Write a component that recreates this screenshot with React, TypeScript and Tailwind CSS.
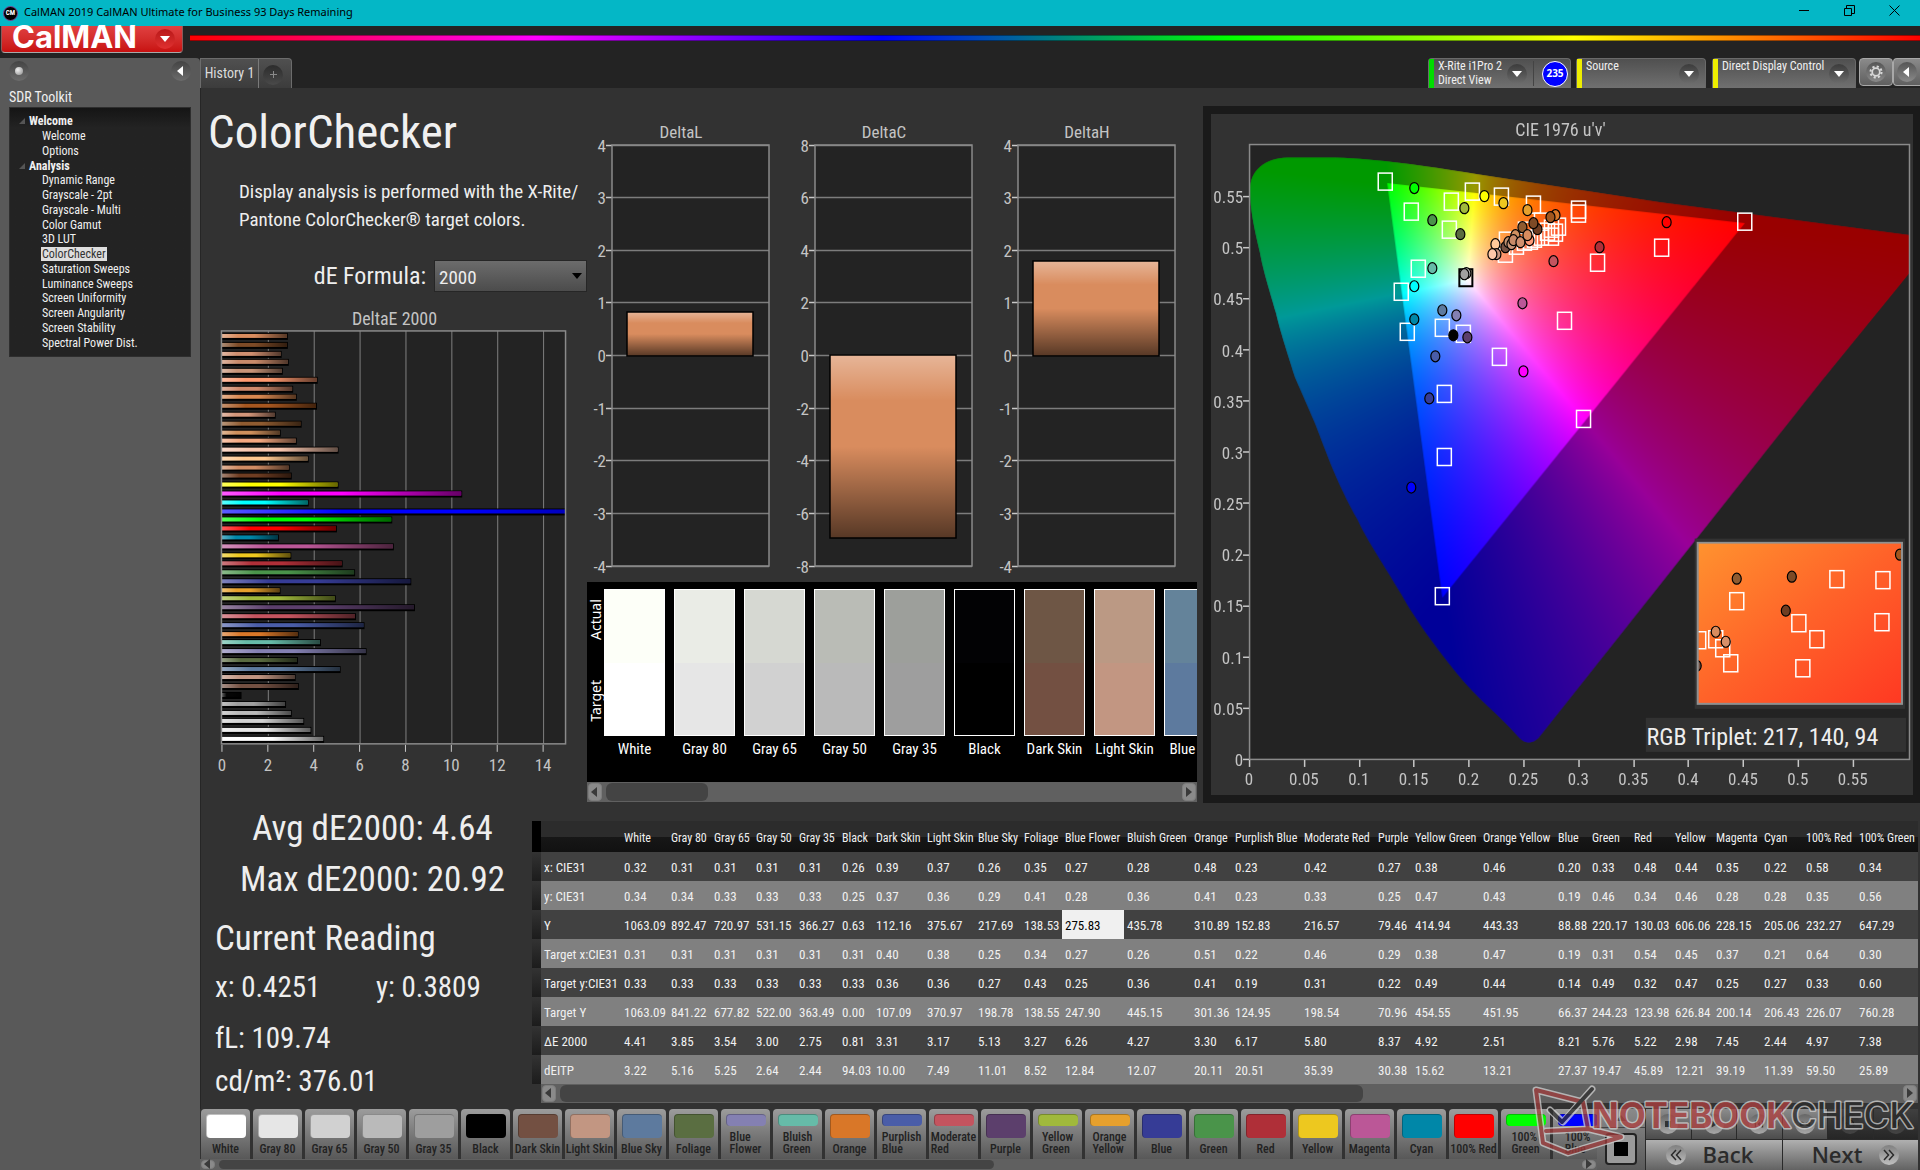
import { useLayoutEffect, useRef } from 'react';
import type { ReactNode } from 'react';

const BAR_DATA: [string, number][] = [
  ['#d98c5e', 2.83], ['#7d4a26', 2.83], ['#d08f70', 2.56], ['#c98a6a', 2.87], ['#c89478', 2.61], ['#ff9a70', 4.13],
  ['#d08a6c', 3.06], ['#d98850', 3.22], ['#a5561f', 4.1], ['#d4967a', 2.3], ['#8f5b30', 3.43], ['#cf905c', 2.52],
  ['#f5a880', 3.22], ['#f8c6ae', 5.04], ['#ffc890', 3.74], ['#d08c64', 2.91], ['#6f3d22', 3.0], ['#ffff00', 5.04],
  ['#ff00ff', 10.43], ['#00ffff', 3.74], ['#0000ff', 20.92], ['#00ff00', 7.38], ['#ff0000', 4.97], ['#0087a8', 2.44],
  ['#bb5797', 7.45], ['#eec81f', 2.98], ['#b02f38', 5.22], ['#4a944a', 5.76], ['#363c96', 8.21], ['#e6a02d', 2.51],
  ['#a0b93c', 4.92], ['#5c3f6c', 8.37], ['#c4545f', 5.8], ['#4a5da8', 6.17], ['#d97728', 3.3], ['#66bba8', 4.27],
  ['#8480b2', 6.26], ['#5a6b40', 3.27], ['#5d7a9e', 5.13], ['#c29682', 3.17], ['#735042', 3.31], ['#050505', 0.81],
  ['#a0a0a0', 2.75], ['#bababa', 3.0], ['#d2d2d2', 3.54], ['#e8e8e8', 3.85], ['#ffffff', 4.41],
];

const COLUMNS: { name: string; width: number; values: string[] }[] = [
  { name: 'White', width: 47, values: ['0.32', '0.34', '1063.09', '0.31', '0.33', '1063.09', '4.41', '3.22'] },
  { name: 'Gray 80', width: 43, values: ['0.31', '0.34', '892.47', '0.31', '0.33', '841.22', '3.85', '5.16'] },
  { name: 'Gray 65', width: 42, values: ['0.31', '0.33', '720.97', '0.31', '0.33', '677.82', '3.54', '5.25'] },
  { name: 'Gray 50', width: 43, values: ['0.31', '0.33', '531.15', '0.31', '0.33', '522.00', '3.00', '2.64'] },
  { name: 'Gray 35', width: 43, values: ['0.31', '0.33', '366.27', '0.31', '0.33', '363.49', '2.75', '2.44'] },
  { name: 'Black', width: 34, values: ['0.26', '0.25', '0.63', '0.31', '0.33', '0.00', '0.81', '94.03'] },
  { name: 'Dark Skin', width: 51, values: ['0.39', '0.37', '112.16', '0.40', '0.36', '107.09', '3.31', '10.00'] },
  { name: 'Light Skin', width: 51, values: ['0.37', '0.36', '375.67', '0.38', '0.36', '370.97', '3.17', '7.49'] },
  { name: 'Blue Sky', width: 46, values: ['0.26', '0.29', '217.69', '0.25', '0.27', '198.78', '5.13', '11.01'] },
  { name: 'Foliage', width: 41, values: ['0.35', '0.41', '138.53', '0.34', '0.43', '138.55', '3.27', '8.52'] },
  { name: 'Blue Flower', width: 62, values: ['0.27', '0.28', '275.83', '0.27', '0.25', '247.90', '6.26', '12.84'] },
  { name: 'Bluish Green', width: 67, values: ['0.28', '0.36', '435.78', '0.26', '0.36', '445.15', '4.27', '12.07'] },
  { name: 'Orange', width: 41, values: ['0.48', '0.41', '310.89', '0.51', '0.41', '301.36', '3.30', '20.11'] },
  { name: 'Purplish Blue', width: 69, values: ['0.23', '0.23', '152.83', '0.22', '0.19', '124.95', '6.17', '20.51'] },
  { name: 'Moderate Red', width: 74, values: ['0.42', '0.33', '216.57', '0.46', '0.31', '198.54', '5.80', '35.39'] },
  { name: 'Purple', width: 37, values: ['0.27', '0.25', '79.46', '0.29', '0.22', '70.96', '8.37', '30.38'] },
  { name: 'Yellow Green', width: 68, values: ['0.38', '0.47', '414.94', '0.38', '0.49', '454.55', '4.92', '15.62'] },
  { name: 'Orange Yellow', width: 75, values: ['0.46', '0.43', '443.33', '0.47', '0.44', '451.95', '2.51', '13.21'] },
  { name: 'Blue', width: 34, values: ['0.20', '0.19', '88.88', '0.19', '0.14', '66.37', '8.21', '27.37'] },
  { name: 'Green', width: 42, values: ['0.33', '0.46', '220.17', '0.31', '0.49', '244.23', '5.76', '19.47'] },
  { name: 'Red', width: 41, values: ['0.48', '0.34', '130.03', '0.54', '0.32', '123.98', '5.22', '45.89'] },
  { name: 'Yellow', width: 41, values: ['0.44', '0.46', '606.06', '0.45', '0.47', '626.84', '2.98', '12.21'] },
  { name: 'Magenta', width: 48, values: ['0.35', '0.28', '228.15', '0.37', '0.25', '200.14', '7.45', '39.19'] },
  { name: 'Cyan', width: 42, values: ['0.22', '0.28', '205.06', '0.21', '0.27', '206.43', '2.44', '11.39'] },
  { name: '100% Red', width: 53, values: ['0.58', '0.35', '232.27', '0.64', '0.33', '226.07', '4.97', '59.50'] },
  { name: '100% Green', width: 62, values: ['0.34', '0.56', '647.29', '0.30', '0.60', '760.28', '7.38', '25.89'] },
];
const ROWS = ['x: CIE31', 'y: CIE31', 'Y', 'Target x:CIE31', 'Target y:CIE31', 'Target Y', 'ΔE 2000', 'dEITP'];

const PATCHES: [string, string, string][] = [
  ['White', '#fdfff8', '#ffffff'], ['Gray 80', '#eaece6', '#e6e6e6'], ['Gray 65', '#d6d8d2', '#d1d1d1'],
  ['Gray 50', '#babcb6', '#bababa'], ['Gray 35', '#9d9f9b', '#9e9e9e'], ['Black', '#020204', '#000000'],
  ['Dark Skin', '#6e5645', '#735042'], ['Light Skin', '#bb9984', '#c29682'], ['Blue Sky', '#64839a', '#5d7a9e'],
];

const SWATCHES: [string, string][] = [
  ['White', '#ffffff'], ['Gray 80', '#e6e6e6'], ['Gray 65', '#d1d1d1'], ['Gray 50', '#bababa'], ['Gray 35', '#9e9e9e'],
  ['Black', '#000000'], ['Dark Skin', '#735042'], ['Light Skin', '#c29682'], ['Blue Sky', '#5d7a9e'], ['Foliage', '#5a6e41'],
  ['Blue|Flower', '#8480b2'], ['Bluish|Green', '#66bba8'], ['Orange', '#d97728'], ['Purplish|Blue', '#4a5da8'],
  ['Moderate|Red', '#c4545f'], ['Purple', '#5c3f6c'], ['Yellow|Green', '#a0b93c'], ['Orange|Yellow', '#e6a02d'],
  ['Blue', '#363c96'], ['Green', '#4a944a'], ['Red', '#af2f38'], ['Yellow', '#edc81f'], ['Magenta', '#bb5797'],
  ['Cyan', '#0087a8'], ['100% Red', '#ff0000'], ['100%|Green', '#00ff00'], ['100%|Blue', '#0000ff'],
];

const NAV: { title: string; items: string[] }[] = [
  { title: 'Welcome', items: ['Welcome', 'Options'] },
  {
    title: 'Analysis',
    items: ['Dynamic Range', 'Grayscale - 2pt', 'Grayscale - Multi', 'Color Gamut', '3D LUT', 'ColorChecker', 'Saturation Sweeps',
      'Luminance Sweeps', 'Screen Uniformity', 'Screen Angularity', 'Screen Stability', 'Spectral Power Dist.'],
  },
];

const TARGETS: [number, number][] = [
  [1385, 181], [1411, 211], [1451, 201], [1472, 191], [1501, 196], [1533, 204], [1449, 229], [1418, 268], [1401, 291],
  [1407, 331], [1442, 327], [1463, 333], [1499, 356], [1444, 393], [1578, 209], [1578, 213], [1597, 262], [1661, 247],
  [1744, 221], [1564, 320], [1583, 418], [1444, 456], [1442, 595], [1506, 240], [1505, 253], [1516, 245], [1524, 241],
  [1530, 240], [1534, 238], [1541, 221], [1541, 236], [1547, 231], [1551, 228], [1551, 236], [1555, 232], [1558, 226], [1525, 230],
];

const READINGS: [number, number, string][] = [
  [1464, 208, '#a0b93c'], [1484, 196, '#ffff00'], [1503, 203, '#edc81f'], [1460, 234, '#5a6b40'], [1527, 210, '#e6a02d'],
  [1466, 273, '#b8b8b8'], [1464, 274, '#a0a0a0'], [1555, 215, '#d97728'], [1550, 217, '#a0561f'], [1537, 229, '#6f3d22'],
  [1522, 227, '#8f5b30'], [1533, 223, '#7d4a26'], [1515, 235, '#d09060'], [1495, 244, '#ffca9a'], [1496, 254, '#c89680'],
  [1492, 254, '#ffc8a8'], [1505, 247, '#735042'], [1508, 242, '#c09070'], [1511, 244, '#c89478'], [1513, 240, '#c88a68'],
  [1520, 242, '#d0906f'], [1529, 240, '#ff9a78'], [1527, 235, '#d98c5e'], [1599, 247, '#af2f38'], [1553, 261, '#c4545f'],
  [1522, 303, '#bb5797'], [1442, 310, '#5d7a9e'], [1456, 315, '#8480b2'], [1453, 335, '#000000'], [1467, 337, '#5c3f6c'],
  [1523, 371, '#ff00ff'], [1414, 188, '#00ff00'], [1432, 220, '#4a944a'], [1432, 268, '#66bba8'], [1414, 286, '#00ffff'],
  [1414, 319, '#0087a8'], [1435, 356, '#4a5da8'], [1429, 398, '#363c96'], [1411, 487, '#0000ff'], [1666, 222, '#ff0000'],
];

const ZOOM_TARGETS: [number, number][] = [
  [1836, 578], [1882, 579], [1736, 600], [1798, 622], [1881, 621], [1816, 638], [1802, 667], [1730, 662], [1722, 647], [1715, 638], [1698, 639],
];
const ZOOM_READINGS: [number, number, string][] = [
  [1736, 578, '#8f5b30'], [1791, 576, '#7d4a26'], [1785, 610, '#6f3d22'], [1715, 631, '#d98c5e'], [1725, 641, '#d9906a'],
  [1899, 554, '#a0561f'], [1696, 665, '#735042'],
];

function Sheen({ id, vertical }: { id: string; vertical?: boolean }) {
  return (
    <linearGradient id={id} x1="0" y1="0" x2={vertical ? '0' : '1'} y2={vertical ? '1' : '0'}>
      <stop offset="0" stopColor="#fff" stopOpacity="0.36" />
      <stop offset="0.25" stopColor="#fff" stopOpacity="0" />
      <stop offset="0.5" stopColor="#000" stopOpacity="0" />
      <stop offset="1" stopColor="#000" stopOpacity="0.6" />
    </linearGradient>
  );
}

function DeltaEChart() {
  const x = (v: number) => 221 + v * 23;
  return (
    <svg viewBox="200 306 387 480" className="block w-full" role="img" aria-label="DeltaE 2000 bar chart">
      <defs>
        <Sheen id="bar-sheen" />
        <clipPath id="bar-clip"><rect x="220" y="331" width="346" height="416" /></clipPath>
      </defs>
      <text x="394" y="326" textAnchor="middle" className="fill-[#c4c4c4] text-[18px]">DeltaE 2000</text>
      <rect x="220.5" y="332" width="345" height="414" fill="#232323" />
      {[2, 4, 6, 8, 10, 12, 14].map((v) => (
        <line key={v} x1={x(v) + 0.5} x2={x(v) + 0.5} y1="332" y2="746" stroke="#808080" />
      ))}
      <g clipPath="url(#bar-clip)">
        {BAR_DATA.map(([c, v], i) => {
          const y = Math.round(337 + i * 8.78);
          return (
            <g key={i}>
              <rect x="219" y={y - 3} width={v * 23 + 3} height="7" fill="#000" />
              <rect x="221" y={y - 2} width={v * 23} height="4" fill={c} />
              <rect x="221" y={y - 2} width={v * 23} height="4" fill="url(#bar-sheen)" />
            </g>
          );
        })}
      </g>
      <rect x="220.5" y="332" width="345" height="414" fill="none" stroke="#8a8a8a" strokeWidth="1.5" />
      {[0, 2, 4, 6, 8, 10, 12, 14].map((v) => (
        <g key={v}>
          <line x1={x(v)} x2={x(v)} y1="747" y2="754" stroke="#c8c8c8" />
          <text x={x(v)} y="773" textAnchor="middle" className="fill-[#c4c4c4] text-[17px]">{v}</text>
        </g>
      ))}
    </svg>
  );
}

function DeltaCharts() {
  const charts = [
    { name: 'DeltaL', left: 612, max: 4, from: 0, to: 0.82 },
    { name: 'DeltaC', left: 815, max: 8, from: -6.93, to: 0 },
    { name: 'DeltaH', left: 1018, max: 4, from: 0, to: 1.78 },
  ];
  return (
    <svg viewBox="587 88 610 494" className="block w-full" role="img" aria-label="DeltaL, DeltaC and DeltaH bar charts">
      <defs><Sheen id="delta-sheen" vertical /></defs>
      {charts.map(({ name, left, max, from, to }) => {
        const y = (v: number) => Math.round(355 - (v / max) * 210.5);
        const steps = [4, 3, 2, 1, 0, -1, -2, -3, -4].map((s) => (s * max) / 4);
        return (
          <g key={name}>
            <text x={left + 69} y="138" textAnchor="middle" className="fill-[#c4c4c4] text-[17px]">{name}</text>
            <rect x={left} y={y(max)} width="157" height="421" fill="#232323" />
            {steps.map((s) => (
              <g key={s}>
                <line x1={left} x2={left + 157} y1={y(s) + 0.5} y2={y(s) + 0.5} stroke="#7c7c7c" strokeWidth="1.5" />
                <line x1={left - 6} x2={left} y1={y(s) + 0.5} y2={y(s) + 0.5} stroke="#c8c8c8" strokeWidth="1.5" />
                <text x={left - 6} y={y(s) + 7} textAnchor="end" className="fill-[#c4c4c4] text-[17px]">{s}</text>
              </g>
            ))}
            <rect x={left} y={y(max)} width="157" height="421" fill="none" stroke="#8a8a8a" strokeWidth="1.5" />
            <rect x={left + 15} y={y(to)} width="126" height={y(from) - y(to) + 1} fill="#d98c5e" />
            <rect x={left + 15} y={y(to)} width="126" height={y(from) - y(to) + 1} fill="url(#delta-sheen)" stroke="#000" strokeWidth="1.5" />
          </g>
        );
      })}
    </svg>
  );
}

/* Chromaticity diagram: plot origin and scale in u'v' units. */
const ORIGIN_X = 1250;
const ORIGIN_Y = 758;
const U_SCALE = 1096;
const V_SCALE = 1022;
const LOCUS =
  'M1250 190 C1250 170 1265 158 1287 157.5 L1335 157.5 C1380 159 1420 165 1476 174 L1659 202 L1909 235 L1909 272 L1821 380 L1538 737 Q1528 746 1519 737 C1497 712 1476 697 1457 673 C1430 640 1410 610 1402 595 C1378 555 1365 536 1358 520 C1335 480 1322 440 1315 423 L1295 377 C1285 345 1280 330 1276 313 C1268 285 1263 270 1260 253 C1254 228 1250 208 1250 190 Z';
const GAMUT = 'M1387 183 L1744 223 L1442 597 Z';

function chromaticity(u: number, v: number): [number, number, number] {
  const d = 6 * u - 16 * v + 12;
  const cx = (9 * u) / d;
  const cy = Math.max((4 * v) / d, 0.001);
  const X = cx / cy;
  const Z = (1 - cx - cy) / cy;
  const rgb = [
    3.2406 * X - 1.5372 - 0.4986 * Z,
    -0.9689 * X + 1.8758 + 0.0415 * Z,
    0.0557 * X - 0.204 + 1.057 * Z,
  ].map((c) => Math.max(c, 0));
  const m = Math.max(...rgb) || 1;
  return rgb.map((c) => Math.round((255 * c) / m)) as [number, number, number];
}

function ChromaticityFill() {
  const ref = useRef<HTMLCanvasElement>(null);
  useLayoutEffect(() => {
    const ctx = ref.current?.getContext('2d');
    if (!ctx) return;
    const w = 660;
    const h = 600;
    const left = 1250;
    const top = 150;
    const layer = document.createElement('canvas');
    layer.width = w;
    layer.height = h;
    const lctx = layer.getContext('2d');
    if (!lctx) return;
    const img = lctx.createImageData(w, h);
    for (let j = 0; j < h; j++) {
      for (let i = 0; i < w; i++) {
        const [r, g, b] = chromaticity((left + i - ORIGIN_X) / U_SCALE, (ORIGIN_Y - top - j) / V_SCALE);
        img.data.set([r, g, b, 255], (j * w + i) * 4);
      }
    }
    lctx.putImageData(img, 0, 0);
    ctx.setTransform(1, 0, 0, 1, -1211, -114);
    ctx.save();
    ctx.clip(new Path2D(LOCUS));
    ctx.drawImage(layer, left, top);
    ctx.fillStyle = 'rgba(0,0,0,0.4)';
    ctx.fillRect(left, top, w, h);
    ctx.restore();
    ctx.save();
    ctx.clip(new Path2D(GAMUT));
    ctx.drawImage(layer, left, top);
    ctx.restore();
  }, []);
  return <canvas ref={ref} width={701} height={680} className="absolute inset-0 size-full" aria-hidden="true" />;
}

function Markers({ targets, readings }: { targets: [number, number][]; readings: [number, number, string][] }) {
  return (
    <>
      {targets.map(([x, y], i) => (
        <rect key={i} x={x - 7} y={y - 8} width="14" height="17" fill="none" stroke="#fff" strokeWidth="1.5" />
      ))}
      {readings.map(([x, y, c], i) => (
        <ellipse key={i} cx={x} cy={y} rx="4.5" ry="5.5" fill={c} stroke="#000" strokeWidth="1.2" />
      ))}
    </>
  );
}

function CieChart() {
  const xs = ['0', '0.05', '0.1', '0.15', '0.2', '0.25', '0.3', '0.35', '0.4', '0.45', '0.5', '0.55'];
  return (
    <div className="relative bg-[#323232]">
      <svg viewBox="1211 114 701 680" className="block w-full" aria-hidden="true">
        <rect x="1250" y="144" width="659" height="614" fill="#232323" />
      </svg>
      <ChromaticityFill />
      <svg viewBox="1211 114 701 680" className="absolute inset-0 size-full" role="img" aria-label="CIE 1976 u'v' chart">
        <defs>
          <linearGradient id="zoom-fill" x1="0" y1="0" x2="1" y2="1">
            <stop offset="0" stopColor="#ff932f" />
            <stop offset="0.5" stopColor="#ff6229" />
            <stop offset="1" stopColor="#ff3822" />
          </linearGradient>
          <clipPath id="zoom-clip"><rect x="1697" y="542" width="204" height="161" /></clipPath>
        </defs>
        <text x="1560" y="136" textAnchor="middle" className="fill-[#c4c4c4] text-[18px]">CIE 1976 u'v'</text>
        <rect x="1249.5" y="144.5" width="659" height="614" fill="none" stroke="#8a8a8a" strokeWidth="1.5" />
        {xs.map((t, i) => (
          <g key={t}>
            <line x1={1249.5 + Math.round(i * 54.8)} x2={1249.5 + Math.round(i * 54.8)} y1="759" y2="766" stroke="#c8c8c8" strokeWidth="1.5" />
            <text x={1249 + i * 54.8} y="784" textAnchor="middle" className="fill-[#c4c4c4] text-[17px]">{t}</text>
            <line x1="1243" x2="1249" y1={758.5 - Math.round(i * 51.1)} y2={758.5 - Math.round(i * 51.1)} stroke="#c8c8c8" strokeWidth="1.5" />
            <text x="1243" y={765 - i * 51.1} textAnchor="end" className="fill-[#c4c4c4] text-[17px]">{t}</text>
          </g>
        ))}
        <Markers targets={TARGETS} readings={[]} />
        <rect x="1459" y="269" width="13" height="17" fill="none" stroke="#000" strokeWidth="2" />
        <Markers targets={[]} readings={READINGS} />
        <rect x="1694" y="538" width="210" height="170" fill="#323232" />
        <g clipPath="url(#zoom-clip)">
          <rect x="1696" y="541" width="206" height="163" fill="url(#zoom-fill)" />
          <Markers targets={ZOOM_TARGETS} readings={ZOOM_READINGS} />
        </g>
        <rect x="1697" y="542" width="204" height="161" fill="none" stroke="#909090" strokeWidth="2" />
        <rect x="1645" y="717" width="260" height="34" fill="#323232" />
        <text x="1646" y="744" className="fill-[#eeeeee] text-[24px]">RGB Triplet: 217, 140, 94</text>
      </svg>
    </div>
  );
}

function Arrow({ dir, className = '' }: { dir: 'left' | 'right' | 'down' | 'up'; className?: string }) {
  const d = { left: 'M7 0 L1 5 L7 10 Z', right: 'M2 0 L8 5 L2 10 Z', down: 'M0 2 H10 L5 8 Z', up: 'M0 8 H10 L5 2 Z' }[dir];
  return (
    <svg viewBox="0 0 10 10" className={`block size-2.5 fill-current ${className}`} aria-hidden="true">
      <path d={d} />
    </svg>
  );
}

function Knob({ children, tone = 'from-[#444] to-[#6c6c6c] text-white' }: { children: ReactNode; tone?: string }) {
  return <span className={`flex size-5 shrink-0 items-center justify-center rounded-full bg-linear-to-b ${tone}`}>{children}</span>;
}

function ScrollBar({ label, thumb, className = '' }: { label: string; thumb: string; className?: string }) {
  const end = 'flex w-3.5 shrink-0 items-center justify-center rounded-sm border border-[#7d7d7d] bg-[#8a8a8a] text-[#3a3a3a]';
  return (
    <div className={`flex gap-1 bg-[#606060] p-px ${className}`}>
      <button type="button" aria-label={`Scroll ${label} left`} className={end}><Arrow dir="left" /></button>
      <div className="flex flex-1"><div className={`rounded-md bg-[#444] ${thumb}`} /></div>
      <button type="button" aria-label={`Scroll ${label} right`} className={end}><Arrow dir="right" /></button>
    </div>
  );
}

function DeviceTab({ lines, stripe, className, children }: { lines: string[]; stripe: string; className: string; children?: ReactNode }) {
  return (
    <div className={`flex h-[30px] rounded-t border border-b-0 border-[#6a6a6a] bg-linear-to-b from-[#505050] to-[#707070] ${className}`}>
      <span className={`w-[5px] shrink-0 ${stripe}`} />
      <button type="button" className="flex flex-1 items-center justify-between pr-1.5 pl-1 text-left text-[12px] leading-[14px] text-[#f0f0f0]">
        <span className="self-start whitespace-nowrap">
          {lines.map((l) => <span key={l} className="block">{l}</span>)}
        </span>
        <Knob tone="from-[#3c3c3c] to-[#6c6c6c] text-white"><Arrow dir="down" /></Knob>
      </button>
      {children}
    </div>
  );
}

function Header() {
  return (
    <header>
      <div className="flex h-[26px] items-center bg-[#04b7c6] px-[3px] text-black">
        <span className="flex size-[15px] items-center justify-center rounded-full border border-[#7a4a9a] bg-black text-[7px] font-bold text-white">CM</span>
        <span className="ml-1.5 pb-0.5 font-['Noto_Sans',sans-serif] text-[11px]">CalMAN 2019 CalMAN Ultimate for Business 93 Days Remaining</span>
        <div className="ml-auto flex items-center gap-[34px] pr-[17px] pb-1.5">
          <button type="button" aria-label="Minimize">
            <svg viewBox="0 0 11 11" className="block size-[11px]"><path d="M0 5.5 H10" stroke="#000" /></svg>
          </button>
          <button type="button" aria-label="Restore">
            <svg viewBox="0 0 11 11" className="block size-[11px]"><path d="M0.5 3.5 H7.5 V10.5 H0.5 Z M2.5 3.5 V0.5 H10.5 V8.5 H7.5" fill="none" stroke="#000" /></svg>
          </button>
          <button type="button" aria-label="Close">
            <svg viewBox="0 0 11 11" className="block size-[11px]"><path d="M0.5 0.5 L10.5 10.5 M10.5 0.5 L0.5 10.5" stroke="#000" /></svg>
          </button>
        </div>
      </div>
      <div className="flex h-8 items-start">
        <button type="button" className="ml-px flex h-[27px] w-[182px] items-center justify-between rounded-b border border-t-0 border-[#8a5a5a] border-b-[#a8a8a8] bg-linear-to-b from-[#e04040] to-[#c80f0f] pr-[7px] pl-2.5 text-white">
          <span className="pb-1 font-[Inter,sans-serif] text-[31px] leading-6 font-bold">CalMAN</span>
          <Knob tone="from-[#b81818] to-[#e03030] text-white"><Arrow dir="down" /></Knob>
        </button>
        <div className="mt-[9px] ml-[7px] h-[6px] flex-1 border-y border-black/40 bg-[linear-gradient(to_right,#ff0000,#ff00ff,#0000ff,#00ff00,#ffff00,#ff0000)]" />
      </div>
    </header>
  );
}

function Sidebar() {
  return (
    <aside className="w-[200px] shrink-0 rounded-tr bg-[#595959]">
      <div className="flex items-center justify-between px-[9px] pt-[3px]">
        <button type="button" aria-label="Record">
          <Knob><span className="size-2 rounded-full bg-radial-[at_35%_35%] from-[#f0f0f0] to-[#8a8a8a]" /></Knob>
        </button>
        <button type="button" aria-label="Collapse sidebar"><Knob><Arrow dir="left" /></Knob></button>
      </div>
      <h2 className="mt-1.5 pl-[9px] text-[14px] leading-5 text-[#f0f0f0]">SDR Toolkit</h2>
      <nav aria-label="SDR Toolkit" className="mx-[9px] flex h-[250px] flex-col border border-[#2e2e2e] bg-linear-to-b from-[#151515] via-[#232323] via-8% to-[#232323] py-1.5 text-[12px] leading-[14px] text-[#f0f0f0]">
        {NAV.map((g) => (
          <ul key={g.title} className="contents">
            <li className="flex flex-1 items-center pl-[9px] font-bold">
              <svg viewBox="0 0 6 6" className="mr-1 size-1.5 fill-[#555]" aria-hidden="true"><path d="M6 0 V6 H0 Z" /></svg>
              {g.title}
            </li>
            {g.items.map((t) => (
              <li key={t} className="flex flex-1 items-center pl-[31px]">
                <a href="#" className={t === 'ColorChecker' ? 'bg-[#dedede] px-px text-[#333]' : 'px-px'}>{t}</a>
              </li>
            ))}
          </ul>
        ))}
      </nav>
    </aside>
  );
}

function TopBar() {
  const square = 'flex h-7 items-center justify-center rounded border border-[#a8a8a8] bg-linear-to-b from-[#8a8a8a] to-[#606060]';
  return (
    <div className="flex h-[30px] justify-between">
      <div className="flex rounded-tr border border-b-0 border-[#6c6c6c] bg-linear-to-b from-[#505050] to-[#3c3c3c]">
        <button type="button" className="w-[58px] border-r border-[#7a7a7a] text-[14px] text-[#dcdcdc]">History 1</button>
        <button type="button" aria-label="Add history" className="flex w-8 items-center justify-center pt-0.5 pr-1">
          <Knob tone="from-[#2c2c2c] to-[#4a4a4a] text-[#8a8a8a]">
            <svg viewBox="0 0 7 7" className="size-[7px]" stroke="currentColor" aria-hidden="true"><path d="M3.5 0 V7 M0 3.5 H7" /></svg>
          </Knob>
        </button>
      </div>
      <div className="flex">
        <DeviceTab lines={['X-Rite i1Pro 2', 'Direct View']} stripe="bg-[#00dd00]" className="mr-[5px] w-[143px]">
          <span className="my-0.5 flex w-[37px] shrink-0 items-center justify-center border-l border-[#444] pl-1.5">
            <span className="flex size-[26px] items-center justify-center rounded-full border border-white bg-[#0000ff] font-['Open_Sans',sans-serif] text-[10px] font-bold text-white">235</span>
          </span>
        </DeviceTab>
        <DeviceTab lines={['Source']} stripe="bg-[#eeee00]" className="mr-[6px] w-[130px]" />
        <DeviceTab lines={['Direct Display Control']} stripe="bg-[#eeee00]" className="mr-[3px] w-[144px]" />
        <button type="button" aria-label="Settings" className={`w-[34px] ${square}`}>
          <Knob tone="from-[#555] to-[#8a8a8a]">
            <svg viewBox="0 0 24 24" className="size-3.5" fill="none" stroke="#d8d8d8" aria-hidden="true">
              <circle cx="12" cy="12" r="6.5" strokeWidth="3" />
              <circle cx="12" cy="12" r="9.5" strokeWidth="3.5" strokeDasharray="3.7 3.76" />
            </svg>
          </Knob>
        </button>
        <button type="button" aria-label="Collapse toolbar" className={`w-[27px] rounded-r-none border-r-0 ${square}`}>
          <Knob tone="from-[#555] to-[#8a8a8a] text-white"><Arrow dir="left" /></Knob>
        </button>
      </div>
    </div>
  );
}

function PatchPanel() {
  return (
    <section aria-label="Actual and target patches">
      <div className="flex h-[200px] overflow-hidden bg-black text-white">
        <div className="flex w-[17px] shrink-0 flex-col items-center pt-[17px] font-['Noto_Sans',sans-serif] text-[14px] leading-4">
          <span className="h-[81px] shrink-0 rotate-180 text-right [writing-mode:vertical-rl]">Actual</span>
          <span className="rotate-180 [writing-mode:vertical-rl]">Target</span>
        </div>
        <div className="flex gap-[9px] pt-[7px]">
          {PATCHES.map(([name, actual, target]) => (
            <figure key={name} className="w-[61px] shrink-0">
              <div className="flex h-[147px] flex-col border border-white">
                <div className="h-1/2" style={{ background: actual }} />
                <div className="h-1/2" style={{ background: target }} />
              </div>
              <figcaption className="mt-1 text-center text-[15px] leading-[18px] whitespace-nowrap">{name}</figcaption>
            </figure>
          ))}
        </div>
      </div>
      <ScrollBar label="patches" thumb="w-[102px]" className="h-5" />
    </section>
  );
}

function ReadingsTable() {
  return (
    <section aria-label="Measurement table" className="mt-[18px] flex min-w-0 flex-1 self-start pr-0.5">
      <div className="w-[9px] shrink-0">
        <div className="h-[31px] bg-black" />
        {ROWS.map((r) => <div key={r} className="h-[29px] bg-linear-to-b from-[#333] to-[#1c1c1c]" />)}
      </div>
      <div className="min-w-0 flex-1">
        <table className="w-full table-fixed text-left text-[13px] whitespace-nowrap text-[#f0f0f0]">
          <colgroup>
            <col style={{ width: 80 }} />
            {COLUMNS.map((c) => <col key={c.name} style={{ width: c.width }} />)}
          </colgroup>
          <thead>
            <tr className="h-[31px] bg-linear-to-b from-[#2c2c2c] from-50% via-[#171717] via-50% to-[#111]">
              <td />
              {COLUMNS.map((c) => <th key={c.name} scope="col" className="p-0 pt-1 pl-[3px] text-[12px] font-normal">{c.name}</th>)}
            </tr>
          </thead>
          <tbody>
            {ROWS.map((r, i) => (
              <tr key={r} className="h-[29px] odd:bg-[#414141] even:bg-[#808080]">
                <th scope="row" className="p-0 pt-0.5 pl-[3px] font-normal">{r}</th>
                {COLUMNS.map((c) => {
                  const active = i === 2 && c.name === 'Blue Flower';
                  return (
                    <td key={c.name} className={active ? 'bg-[#f0f0f0] p-0 pt-0.5 pl-[3px] text-black' : 'p-0 pt-0.5 pl-[3px]'}>{c.values[i]}</td>
                  );
                })}
              </tr>
            ))}
          </tbody>
        </table>
        <ScrollBar label="table" thumb="w-[60%]" className="h-[19px]" />
      </div>
    </section>
  );
}

function SwatchStrip() {
  return (
    <div className="min-w-0 flex-1">
      <div className="flex h-[50px] gap-[3px] overflow-hidden pl-px">
        {SWATCHES.map(([name, color]) => {
          const lines = name.split('|');
          return (
            <button key={name} type="button" className="flex w-[49px] shrink-0 flex-col items-center rounded-t bg-linear-to-b from-[#9c9c9c] to-[#585858] pt-[5px] text-[12px] font-medium text-[#222]">
              <span
                className={`w-10 shrink-0 rounded-sm border-t border-l border-black/25 ${lines.length > 1 ? 'h-3' : 'h-6'}`}
                style={{ background: color }}
              />
              <span className="mt-[5px] text-left leading-3 whitespace-nowrap">
                {lines.map((l) => <span key={l} className="block">{l}</span>)}
              </span>
            </button>
          );
        })}
      </div>
      <ScrollBar label="swatches" thumb="w-[57%]" className="h-[11px]" />
    </div>
  );
}

function Transport() {
  const icons: { name: string; d: string }[] = [
    { name: 'Stop', d: 'M5 5 H15 V15 H5 Z' },
    { name: 'Play', d: 'M6 4 L16 10 L6 16 Z' },
    { name: 'Step', d: 'M3 4 H6 V6 H5 V14 H6 V16 H3 Z M17 4 H14 V6 H15 V14 H14 V16 H17 Z M8 9 L12 6 V14 L8 11 Z' },
    { name: 'Continuous', d: 'M1 10 C1 5 6 5 10 9 C14 5 19 5 19 10 C19 15 14 15 10 11 C6 15 1 15 1 10 Z M4 10 C4 12 6 12 8 10 C6 8 4 8 4 10 Z M16 10 C16 8 14 8 12 10 C14 12 16 12 16 10 Z' },
    { name: 'Refresh', d: 'M10 3 A7 7 0 0 1 17 10 H19 L16 14 L13 10 H15 A5 5 0 0 0 10 5 Z M10 17 A7 7 0 0 1 3 10 H1 L4 6 L7 10 H5 A5 5 0 0 0 10 15 Z' },
    { name: 'Auto', d: 'M10 5 A5 5 0 1 0 10 15 A5 5 0 1 0 10 5 Z' },
  ];
  const nav = "flex h-[31px] flex-1 items-center bg-linear-to-b from-[#b0b0b0] to-[#606060] font-['Open_Sans',sans-serif] text-[22px] leading-none font-semibold text-[#2b2b2b]";
  const navKnob = 'from-[#808080] to-[#c0c0c0] text-[#2b2b2b]';
  return (
    <div className="flex w-[323px] shrink-0 pr-0.5">
      <div className="flex w-[49px] flex-col border-r border-[#2a2a2a] bg-linear-to-b from-[#8a8a8a] to-[#5a5a5a]">
        <button type="button" aria-label="Expand" className="flex h-[19px] items-center justify-center border-b border-[#444] text-[#444]"><Arrow dir="up" /></button>
        <div className="flex flex-1 items-center justify-center">
          <button type="button" aria-label="Pattern window" className="flex size-8 items-center justify-center rounded border-2 border-[#222] bg-[#9a9a9a]">
            <span className="size-3.5 bg-black" />
          </button>
        </div>
      </div>
      <div className="flex flex-1 flex-col gap-px bg-[#2a2a2a]">
        <div className="flex h-[30px] gap-px">
          {icons.map(({ name, d }, i) => (
            <button key={name} type="button" aria-label={name} className={`flex flex-1 items-center justify-center ${i < 4 ? 'bg-linear-to-b from-[#8c8c8c] to-[#4c4c4c]' : 'bg-linear-to-b from-[#404040] to-[#262626]'}`}>
              <Knob tone={i < 4 ? 'from-[#666] to-[#a8a8a8]' : 'from-[#2c2c2c] to-[#444]'}>
                <svg viewBox="0 0 20 20" className={`size-3 ${i < 4 ? 'fill-[#333]' : 'fill-[#1c1c1c]'}`} aria-hidden="true"><path d={d} fillRule="evenodd" /></svg>
              </Knob>
            </button>
          ))}
        </div>
        <div className="flex gap-px">
          <button type="button" className={`pr-3 pl-5 ${nav}`}>
            <Knob tone={navKnob}>
              <svg viewBox="0 0 12 12" className="size-3" fill="none" stroke="currentColor" strokeWidth="1.5"><path d="M6 1 L1.5 6 L6 11 M11 1 L6.5 6 L11 11" /></svg>
            </Knob>
            <span className="flex-1 pb-0.5">Back</span>
          </button>
          <button type="button" className={`pr-[19px] pl-3 ${nav}`}>
            <span className="flex-1 pb-0.5">Next</span>
            <Knob tone={navKnob}>
              <svg viewBox="0 0 12 12" className="size-3" fill="none" stroke="currentColor" strokeWidth="1.5"><path d="M1 1 L5.5 6 L1 11 M6 1 L10.5 6 L6 11" /></svg>
            </Knob>
          </button>
        </div>
      </div>
    </div>
  );
}

function Watermark() {
  return (
    <svg viewBox="1530 1080 386 80" className="pointer-events-none absolute right-1 bottom-2.5 h-20 w-[386px] opacity-75" aria-label="Notebookcheck">
      <g fill="none" strokeLinejoin="round" strokeLinecap="round">
        <g stroke="#d0d0d0" strokeWidth="7">
          <path d="M1536 1089 L1583 1101 L1588 1128 L1621 1136 L1568 1152 L1543 1142 Z M1546 1130 L1588 1128" />
          <path d="M1550 1109 L1563 1121 L1592 1088" />
        </g>
        <path d="M1536 1089 L1583 1101 L1588 1128 L1621 1136 L1568 1152 L1543 1142 Z M1546 1130 L1588 1128" stroke="#a03c3c" strokeWidth="4" />
        <path d="M1550 1109 L1562 1121 L1592 1088" stroke="#303030" strokeWidth="4" />
      </g>
      <g stroke="#d0d0d0" strokeWidth="3" strokeLinejoin="round" paintOrder="stroke" className="font-[Inter,sans-serif] text-[35px]">
        <text x="1592" y="1127" fill="#b04040" className="font-bold">NOTEBOOK</text>
        <text x="1791" y="1127" fill="#2c2c2c" className="font-medium">CHECK</text>
      </g>
    </svg>
  );
}

export default function App() {
  return (
    <div className="relative flex min-h-screen w-full flex-col overflow-hidden bg-[#232323] font-['Roboto_Condensed',Roboto,'Liberation_Sans',sans-serif]">
      <Header />
      <div className="flex flex-1">
        <Sidebar />
        <main className="flex min-w-0 flex-1 flex-col">
          <TopBar />
          <div className="flex flex-1 flex-col border-l border-[#262626] bg-[#323232]">
            <div className="flex">
              <div className="w-[386px] shrink-0">
                <h1 className="mt-4 ml-[7px] text-[47px] leading-[56px] text-[#f0f0f0]">ColorChecker</h1>
                <p className="mt-[18px] ml-[38px] text-[19px] leading-7 whitespace-nowrap text-[#eeeeee]">
                  Display analysis is performed with the X-Rite/
                  <br />
                  Pantone ColorChecker® target colors.
                </p>
                <div className="mt-[26px] flex h-8 items-center justify-end">
                  <label htmlFor="formula" className="mr-2 text-[24px] text-[#eeeeee]">dE Formula:</label>
                  <div className="relative h-8 w-[153px]">
                    <select id="formula" className="h-8 w-full appearance-none border border-[#262626] bg-linear-to-b from-[#6c6c6c] to-[#4c4c4c] pt-1 pl-1 text-[19px] leading-6 text-[#eeeeee]">
                      <option>2000</option>
                    </select>
                    <Arrow dir="down" className="pointer-events-none absolute top-[11px] right-[5px] text-black" />
                  </div>
                </div>
                <div className="mt-[13px]"><DeltaEChart /></div>
              </div>
              <div className="w-[610px] shrink-0">
                <DeltaCharts />
                <PatchPanel />
              </div>
              <div className="mt-[18px] ml-[6px] min-w-0 flex-1 self-start border-8 border-r-[7px] border-[#1a1a1a]">
                <CieChart />
              </div>
            </div>
            <div className="mt-auto flex pb-1.5">
              <div className="w-[331px] shrink-0 whitespace-nowrap text-[#eeeeee]">
                <p className="pl-3 text-center text-[35px] leading-[51px]">Avg dE2000: 4.64</p>
                <p className="pl-3 text-center text-[35px] leading-[51px]">Max dE2000: 20.92</p>
                <h2 className="mt-2 pl-[14px] text-[35px] leading-[51px]">Current Reading</h2>
                <div className="flex pl-[14px] text-[29px] leading-[46px]">
                  <p className="w-[161px]">x: 0.4251</p>
                  <p>y: 0.3809</p>
                </div>
                <p className="mt-1.5 pl-[14px] text-[29px] leading-[44px]">fL: 109.74</p>
                <p className="pl-[14px] text-[29px] leading-[42px]">cd/m²: 376.01</p>
              </div>
              <ReadingsTable />
            </div>
          </div>
          <div className="flex h-[62px] bg-[#323232]">
            <SwatchStrip />
            <Transport />
          </div>
        </main>
      </div>
      <Watermark />
    </div>
  );
}
